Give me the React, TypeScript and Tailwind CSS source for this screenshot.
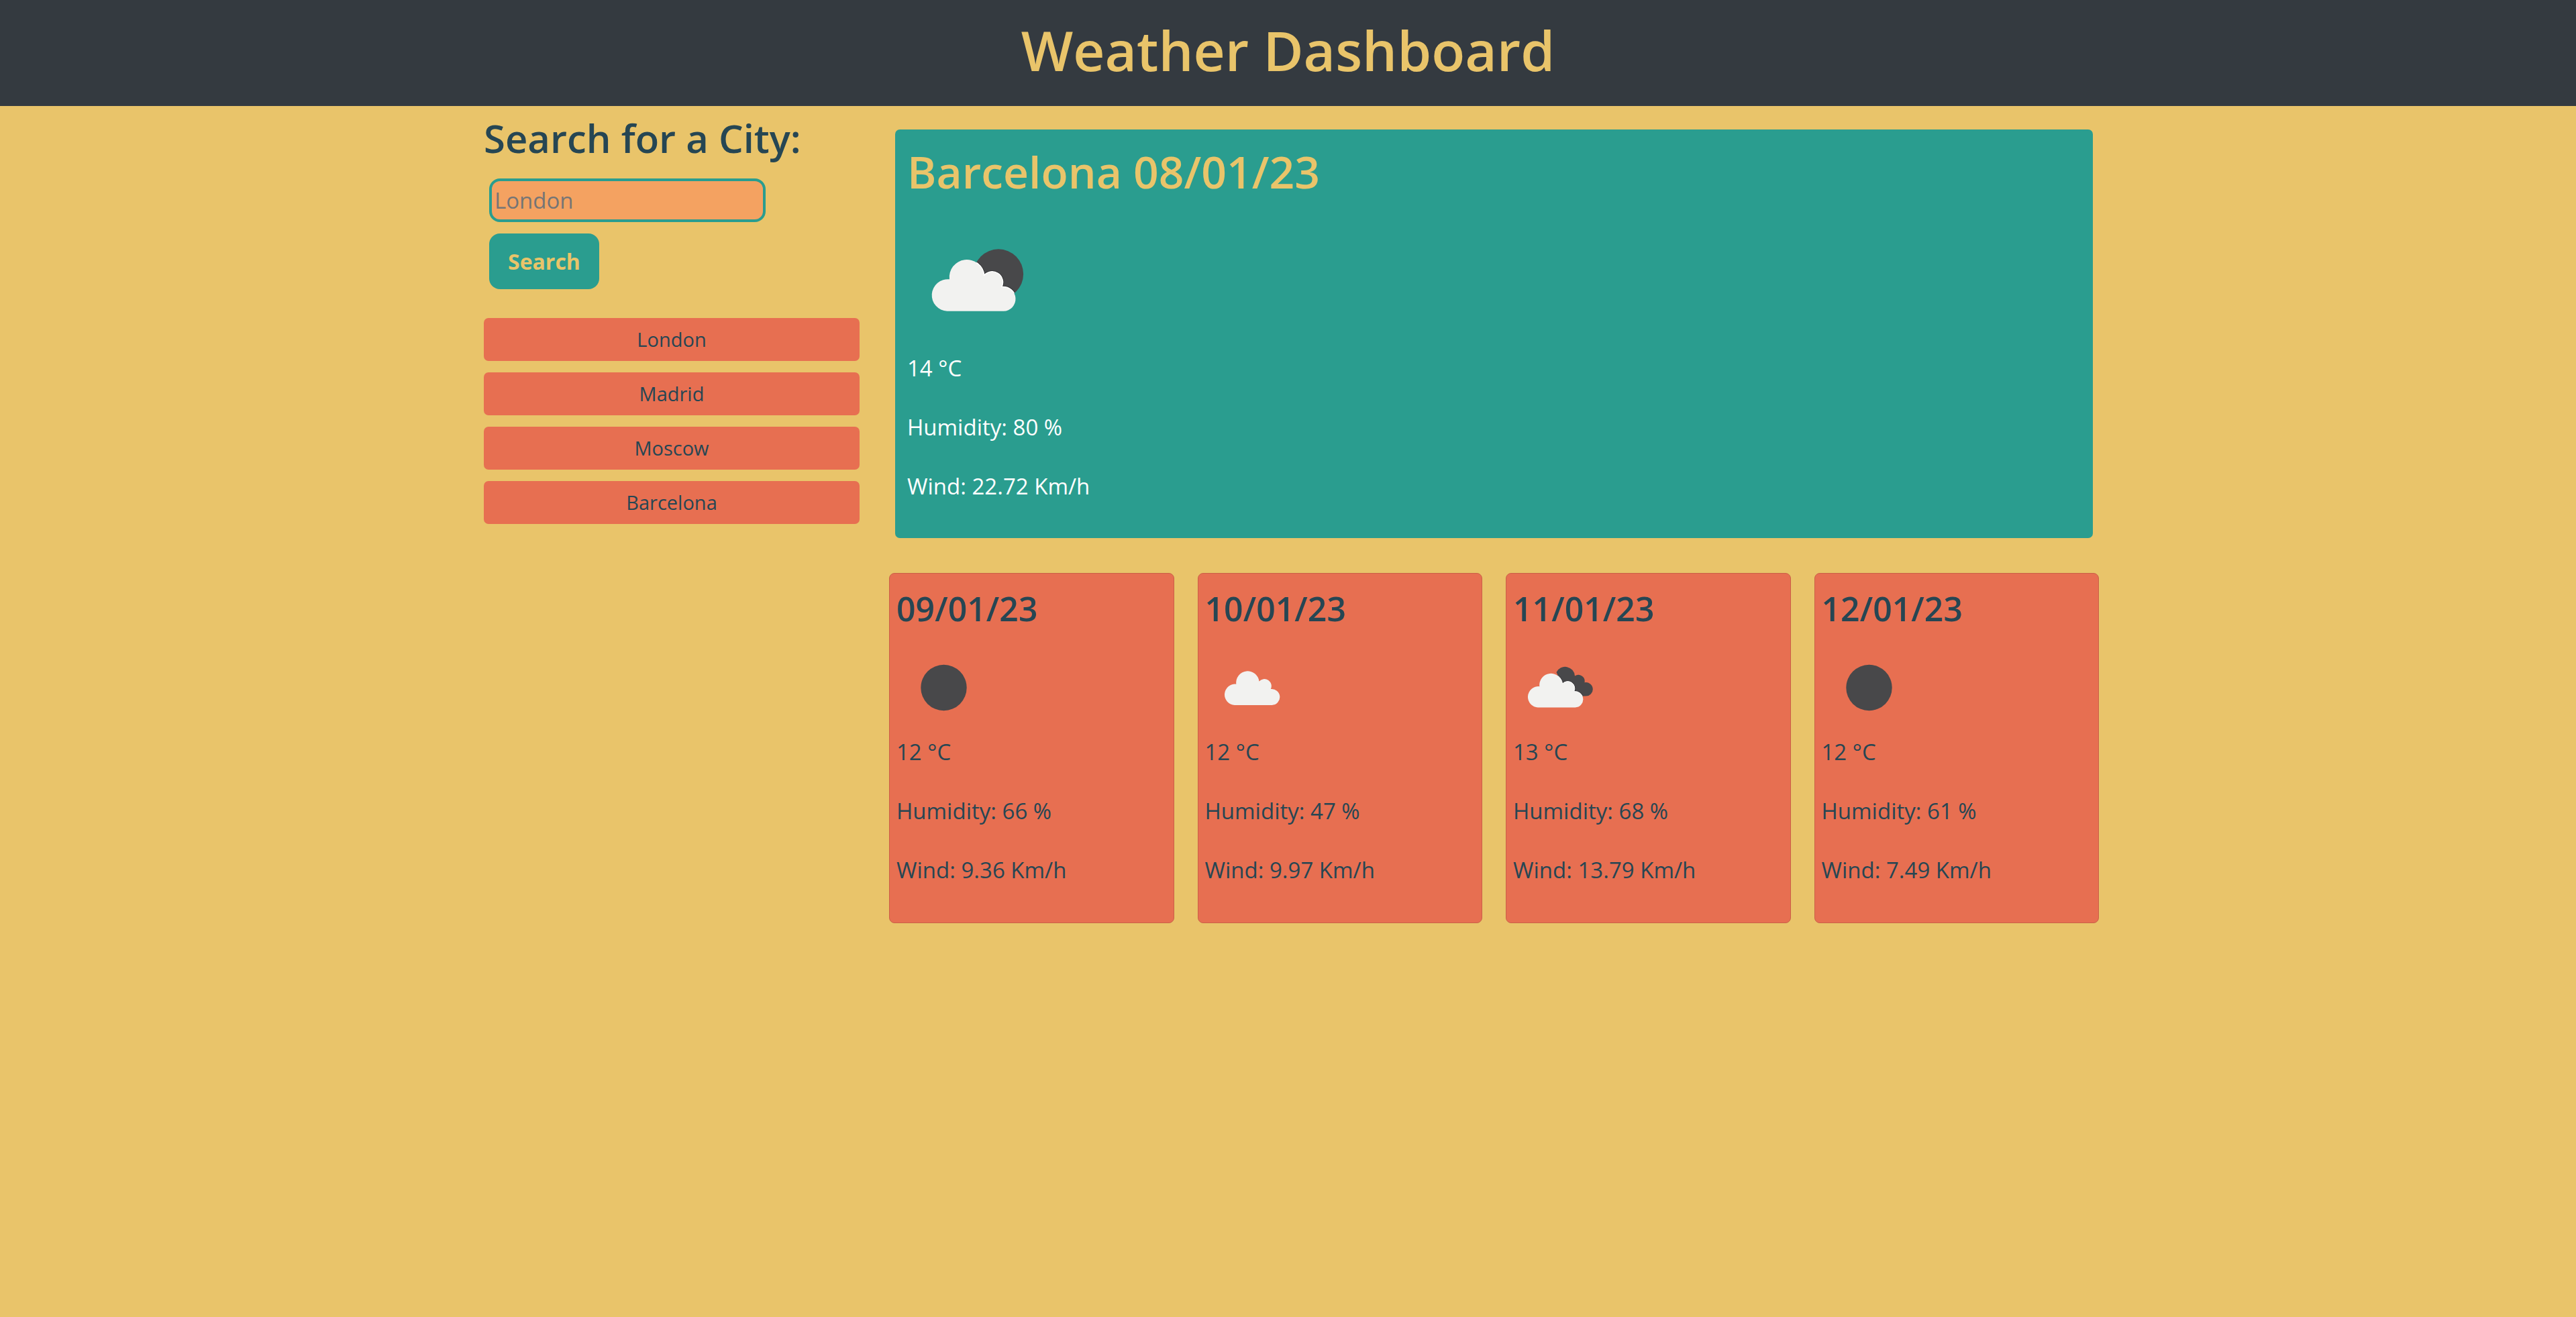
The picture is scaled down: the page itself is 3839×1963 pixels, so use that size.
import { useId } from "react";

type Sky = "clear" | "few" | "scattered" | "broken";

const CLOUD =
  "M15.5 52.5A15.7 15.7 0 1 1 17.8 21.2A17.2 17.2 0 1 1 52 17Q52 17.5 51.8 17.3A10.5 10.5 0 0 1 69.3 28.6A12 12 0 1 1 71 52.5Z";

const PLACEMENT: Record<Sky, string> = {
  clear: "",
  few: "translate(24 47.5) scale(1.01)",
  scattered: "translate(28.5 43.5)",
  broken: "translate(21.5 47)",
};

function WeatherIcon({ sky, label, className }: { sky: Sky; label: string; className: string }) {
  const clip = useId();
  const back =
    sky === "few" ? (
      <circle cx="66" cy="16" r="24.5" />
    ) : sky === "broken" ? (
      <path d="M43 0A14.5 14.5 0 0 1 70.5 5.5A9.5 9.5 0 0 1 85 15.2A10.3 10.3 0 1 1 86.5 35.6L60 36Z" />
    ) : null;
  return (
    <svg viewBox="0 0 140 140" className={className} role="img" aria-label={label}>
      {sky === "clear" ? (
        <circle cx="70.5" cy="70" r="34.2" fill="#48484a" />
      ) : (
        <g transform={PLACEMENT[sky]}>
          {back && (
            <>
              <clipPath id={clip}>{back}</clipPath>
              <g fill="#48484a">{back}</g>
              <g clipPath={`url(#${clip})`}>
                <path d={CLOUD} stroke="#2a2a2c" strokeWidth="2" />
              </g>
            </>
          )}
          <path d={CLOUD} fill="#f2f2f0" />
          {back && (
            <g clipPath={`url(#${clip})`}>
              <path d={CLOUD} fill="none" stroke="#ffffff" strokeWidth="1" />
            </g>
          )}
        </g>
      )}
    </svg>
  );
}

const cities = ["London", "Madrid", "Moscow", "Barcelona"];

const forecast: { date: string; sky: Sky; label: string; temp: string; humidity: string; wind: string }[] = [
  { date: "09/01/23", sky: "clear", label: "Clear sky", temp: "12", humidity: "66", wind: "9.36" },
  { date: "10/01/23", sky: "scattered", label: "Scattered clouds", temp: "12", humidity: "47", wind: "9.97" },
  { date: "11/01/23", sky: "broken", label: "Broken clouds", temp: "13", humidity: "68", wind: "13.79" },
  { date: "12/01/23", sky: "clear", label: "Clear sky", temp: "12", humidity: "61", wind: "7.49" },
];

function Readings({ temp, humidity, wind }: { temp: string; humidity: string; wind: string }) {
  return (
    <div className="flex flex-col gap-9 text-[33px] leading-[52px]">
      <p>{temp} °C</p>
      <p>Humidity: {humidity} %</p>
      <p>Wind: {wind} Km/h</p>
    </div>
  );
}

export default function App() {
  return (
    <div className="min-h-screen bg-[#e9c46a] font-['Open_Sans',sans-serif] text-[#264653]">
      <header className="bg-[#343a40] pt-[21px] pb-[31px] text-center">
        <h1 className="text-[82px] leading-[106px] font-semibold text-[#e9c46a]">Weather Dashboard</h1>
      </header>
      <div className="mx-auto grid max-w-[2417px] grid-cols-[560fr_1803fr] items-start gap-x-11 pl-[10px]">
        <aside className="pt-[10px]">
          <form onSubmit={(e) => e.preventDefault()} className="flex flex-col items-start">
            <label htmlFor="city" className="text-[58px] leading-[76px] font-semibold whitespace-nowrap">
              Search for a City:
            </label>
            <input
              id="city"
              type="text"
              placeholder="London"
              className="mt-[22px] ml-2 h-[65px] w-[412px] rounded-2xl border-4 border-[#2a9d8f] bg-[#f4a261] px-1 text-[33px] placeholder:text-[#757575]"
            />
            <button
              type="submit"
              className="mt-[17px] ml-2 h-[83px] rounded-2xl bg-[#2a9d8f] px-7 text-[32px] font-bold text-[#e9c46a]"
            >
              Search
            </button>
          </form>
          <div className="mt-[43px] flex flex-col gap-[17px]">
            {cities.map((city) => (
              <button key={city} type="button" className="h-16 w-full rounded-[7px] bg-[#e76f51] text-[29px]">
                {city}
              </button>
            ))}
          </div>
        </aside>
        <main>
          <section className="mx-[9px] mt-[35px] rounded-[7px] bg-[#2a9d8f] px-[18px] pt-5 pb-[51px] text-white">
            <h2 className="text-[66px] leading-[84px] font-semibold text-[#e9c46a]">Barcelona 08/01/23</h2>
            <WeatherIcon sky="few" label="Few clouds" className="mt-4 block size-[210px]" />
            <Readings temp="14" humidity="80" wind="22.72" />
          </section>
          <section className="mt-[52px] grid grid-cols-4 gap-[35px]">
            {forecast.map((day) => (
              <article
                key={day.date}
                className="rounded-[8px] border border-[#ca6147] bg-[#e76f51] px-[10px] pt-5 pb-[52px]"
              >
                <h3 className="text-[50px] leading-[64px] font-semibold">{day.date}</h3>
                <WeatherIcon sky={day.sky} label={day.label} className="mt-4 block size-[140px]" />
                <Readings temp={day.temp} humidity={day.humidity} wind={day.wind} />
              </article>
            ))}
          </section>
        </main>
      </div>
    </div>
  );
}
